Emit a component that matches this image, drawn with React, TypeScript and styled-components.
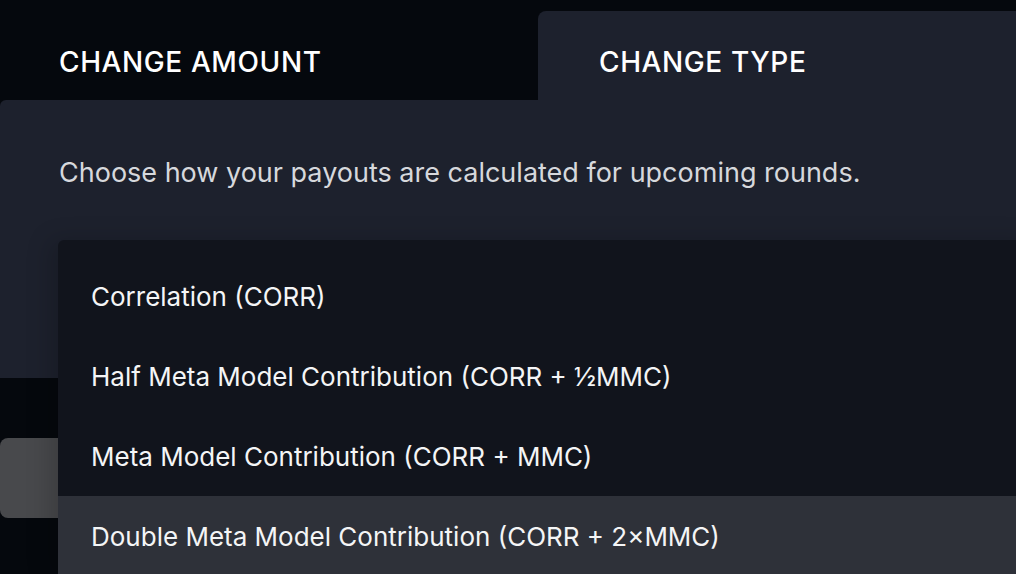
import React from "react";
import styled, { createGlobalStyle } from "styled-components";

const Global = createGlobalStyle`
  html, body { margin: 0; padding: 0; background: #05080d; overflow: hidden; }
  body { width: 1016px; height: 574px; }
  * { box-sizing: border-box; }
`;

const Page = styled.div`
  position: relative;
  width: 1016px;
  height: 574px;
  background: #05080d;
  font-family: Inter, "Noto Sans", sans-serif;
`;

const TabRow = styled.div`
  display: flex;
  align-items: flex-end;
  height: 100px;
`;

const Tab = styled.div<{ $active?: boolean }>`
  display: flex;
  align-items: center;
  height: ${(p) => (p.$active ? "89px" : "100px")};
  flex: ${(p) => (p.$active ? "1" : "0 0 538px")};
  padding-left: ${(p) => (p.$active ? "61px" : "59px")};
  padding-top: ${(p) => (p.$active ? "13px" : "24px")};
  background: ${(p) => (p.$active ? "#1d212d" : "transparent")};
  border-radius: 8px 0 0 0;
  color: #ffffff;
  font-family: Inter, "Noto Sans", sans-serif;
  font-weight: 500;
  font-size: 28px;
  letter-spacing: 0.6px;
`;

const Panel = styled.div`
  height: 278px;
  background: #1d212d;
  border-top-left-radius: 6px;
  padding: 57px 0 0 59px;
`;

const Description = styled.p`
  margin: 0;
  color: #d6d8dc;
  font-size: 27px;
  line-height: 32px;
`;

const Button = styled.div`
  margin-top: 60px;
  width: 300px;
  height: 80px;
  border-radius: 8px;
  background: #48494c;
`;

const Menu = styled.ul`
  position: absolute;
  top: 240px;
  left: 58px;
  width: 980px;
  margin: 0;
  padding: 16px 0 0;
  list-style: none;
  background: #11141c;
  border-radius: 6px;
  box-shadow: -8px 0 24px rgba(0, 0, 0, 0.18);
`;

const Item = styled.li<{ $highlighted?: boolean }>`
  display: flex;
  align-items: center;
  height: 80px;
  padding-left: 33px;
  background: ${(p) => (p.$highlighted ? "#2e3139" : "transparent")};
  color: #f4f5f6;
  font-size: 26px;
`;

const options = [
  "Correlation (CORR)",
  "Half Meta Model Contribution (CORR + ½MMC)",
  "Meta Model Contribution (CORR + MMC)",
  "Double Meta Model Contribution (CORR + 2×MMC)",
];

export default function App() {
  return (
    <Page>
      <Global />
      <TabRow>
        <Tab>CHANGE AMOUNT</Tab>
        <Tab $active>CHANGE TYPE</Tab>
      </TabRow>
      <Panel>
        <Description>Choose how your payouts are calculated for upcoming rounds.</Description>
      </Panel>
      <Button />
      <Menu>
        {options.map((o, i) => (
          <Item key={o} $highlighted={i === 3}>
            {o}
          </Item>
        ))}
      </Menu>
    </Page>
  );
}
